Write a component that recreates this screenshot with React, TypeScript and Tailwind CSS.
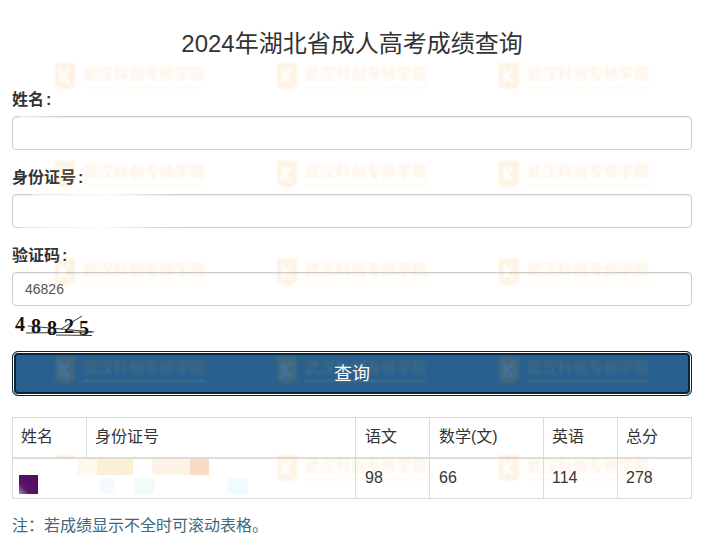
const FONT = "font-['Liberation_Sans','Noto_Sans_CJK_SC',sans-serif]";

function Watermark() {
  return (
    <div className="flex items-center gap-[8px] h-[28px] w-[152px] opacity-[0.12] blur-[0.8px]">
      <svg width="20" height="28" viewBox="0 0 20 28" className="shrink-0">
        <path d="M0 1 L20 1 L20 24 L10 28 L0 24 Z" fill="#f79a20" />
        <path d="M6 6 V21 M14 7 L7.5 14 L14 21" fill="none" stroke="#fff" strokeWidth="3.2" />
      </svg>
      <div className="flex flex-col gap-[3px]">
        <span className="text-[15px] leading-[18px] tracking-[0.3px] font-bold text-[#f79a20] whitespace-nowrap">武汉科创专修学院</span>
        <span className="block h-[2px] w-[122px] bg-[#f7c27a]" />
      </div>
    </div>
  );
}

function Field({ label, value, fade }: { label: string; value?: string; fade?: "short" | "long" }) {
  return (
    <div className="flex flex-col gap-[5px]">
      <label className="h-[22px] text-[16px] leading-[22px] font-bold text-[#333]">
        {label}<span className="ml-[2px]">:</span>
      </label>
      <div className="relative">
        <input
          readOnly
          value={value ?? ""}
          className="block w-full h-[34px] rounded-[4px] border border-[#ccc] bg-white px-[12px] text-[14px] text-[#555] outline-none shadow-[inset_0_1px_1px_rgba(0,0,0,0.075)]"
        />
        {fade === "short" && (
          <span className="absolute left-[8px] top-0 w-[44px] h-[2px] bg-gradient-to-r from-white/70 to-white/0" />
        )}
        {fade === "long" && (
          <>
            <span className="absolute left-[20px] top-0 w-[150px] h-[2px] bg-gradient-to-r from-white/50 via-white/90 to-white/0" />
            <span className="absolute left-[8px] bottom-0 w-[160px] h-[1px] bg-gradient-to-r from-white/50 via-white/90 to-white/0" />
          </>
        )}
      </div>
    </div>
  );
}

function Captcha() {
  return (
    <svg width="92" height="26" viewBox="0 0 92 26" className="block">
      <g fontFamily="'Liberation Serif', serif" fontWeight="700" fontSize="20" fill="#111">
        <text x="3" y="18">4</text>
        <text x="19" y="20">8</text>
        <text x="35" y="22">8</text>
        <text x="52" y="20">2</text>
        <text x="67" y="22">5</text>
      </g>
      <g stroke="#222" strokeWidth="0.9" fill="none">
        <path d="M16 13 L82 19" />
        <path d="M14 20 L80 19" />
        <path d="M44 22 L80 22.5" />
        <path d="M49 16 L70 3" />
      </g>
    </svg>
  );
}

const headers = [
  { t: "姓名", w: "w-[74px]", cls: "pl-[8px]" },
  { t: "身份证号", w: "w-[269px]", cls: "pl-[8px]" },
  { t: "语文", w: "w-[74px]", cls: "pl-[9px]" },
  { t: "数学(文)", w: "w-[114px]", cls: "pl-[9px]" },
  { t: "英语", w: "w-[74px]", cls: "pl-[8px]" },
  { t: "总分", w: "w-[74px]", cls: "pl-[8px]" },
];
const scores = ["98", "66", "114", "278"];

export default function App() {
  return (
    <div className={`relative w-[704px] h-[545px] overflow-hidden bg-white px-[12px] ${FONT}`}>
      <h1 className="pt-[28px] h-[63px] text-center text-[24px] leading-[32px] text-[#333]">2024年湖北省成人高考成绩查询</h1>

      <div className="flex flex-col gap-[17px] mt-[26px]">
        <Field label="姓名" fade="short" />
        <Field label="身份证号" fade="long" />
        <Field label="验证码" value="46826" />
      </div>

      <div className="mt-[7px] h-[26px]">
        <Captcha />
      </div>

      <button className="block w-full h-[45px] mt-[12px] rounded-[6px] border border-[#0c2434] bg-[#28618f] text-[18px] leading-[24px] text-white shadow-[inset_0_0_0_1px_#fff,inset_0_0_0_3px_#0c2434]">
        查询
      </button>

      <div className="mt-[21px] w-[680px] border-t border-l border-[#ddd] text-[16px] text-[#333]">
        <div className="flex h-[41px] border-b-[2px] border-[#ddd]">
          {headers.map((h) => (
            <div key={h.t} className={`${h.w} ${h.cls} border-r border-[#ddd] leading-[38px]`}>{h.t}</div>
          ))}
        </div>
        <div className="flex h-[40px] border-b border-[#ddd]">
          <div className="flex w-[343px] pl-[6px] pr-[78px] border-r border-[#ddd]">
            <span className="mt-[16px] w-[19px] h-[19px] shrink-0 bg-[linear-gradient(45deg,#a78bb0_0%,#5a1568_30%,#4d0a60_100%)]" />
            <div className="relative z-10 flex-1 h-[38px] pl-[39px] bg-white flex flex-col gap-[3px]">
              <div className="flex h-[16px] blur-[0.5px]">
                <span className="w-[20px] bg-[#fef8ee]" />
                <span className="w-[36px] bg-[#fbf0d5]" />
                <span className="w-[19px]" />
                <span className="w-[38px] bg-[#fdf3e6]" />
                <span className="w-[19px] bg-[#fbdcc3]" />
              </div>
              <div className="flex h-[16px] pl-[23px] blur-[0.5px]">
                <span className="w-[15px] bg-[#f3fbfe]" />
                <span className="w-[20px] ml-[20px] bg-[#f1fbf8]" />
                <span className="w-[20px] ml-[73px] bg-[#effbfe]" />
              </div>
            </div>
          </div>
          {scores.map((s, i) => (
            <div key={s} className={`${headers[i + 2].w} ${headers[i + 2].cls} border-r border-[#ddd] leading-[38px]`}>{s}</div>
          ))}
        </div>
      </div>

      <p className="mt-[16px] text-[16px] leading-[22px] text-[#41687c]">{"注\uFF1A若成绩显示不全时可滚动表格。"}</p>

      <div className="absolute inset-0 pointer-events-none pl-[55px] pt-[62px] grid grid-cols-[222px_222px_152px] auto-rows-[98px]">
        {Array.from({ length: 15 }).map((_, i) => (
          <Watermark key={i} />
        ))}
      </div>
    </div>
  );
}
